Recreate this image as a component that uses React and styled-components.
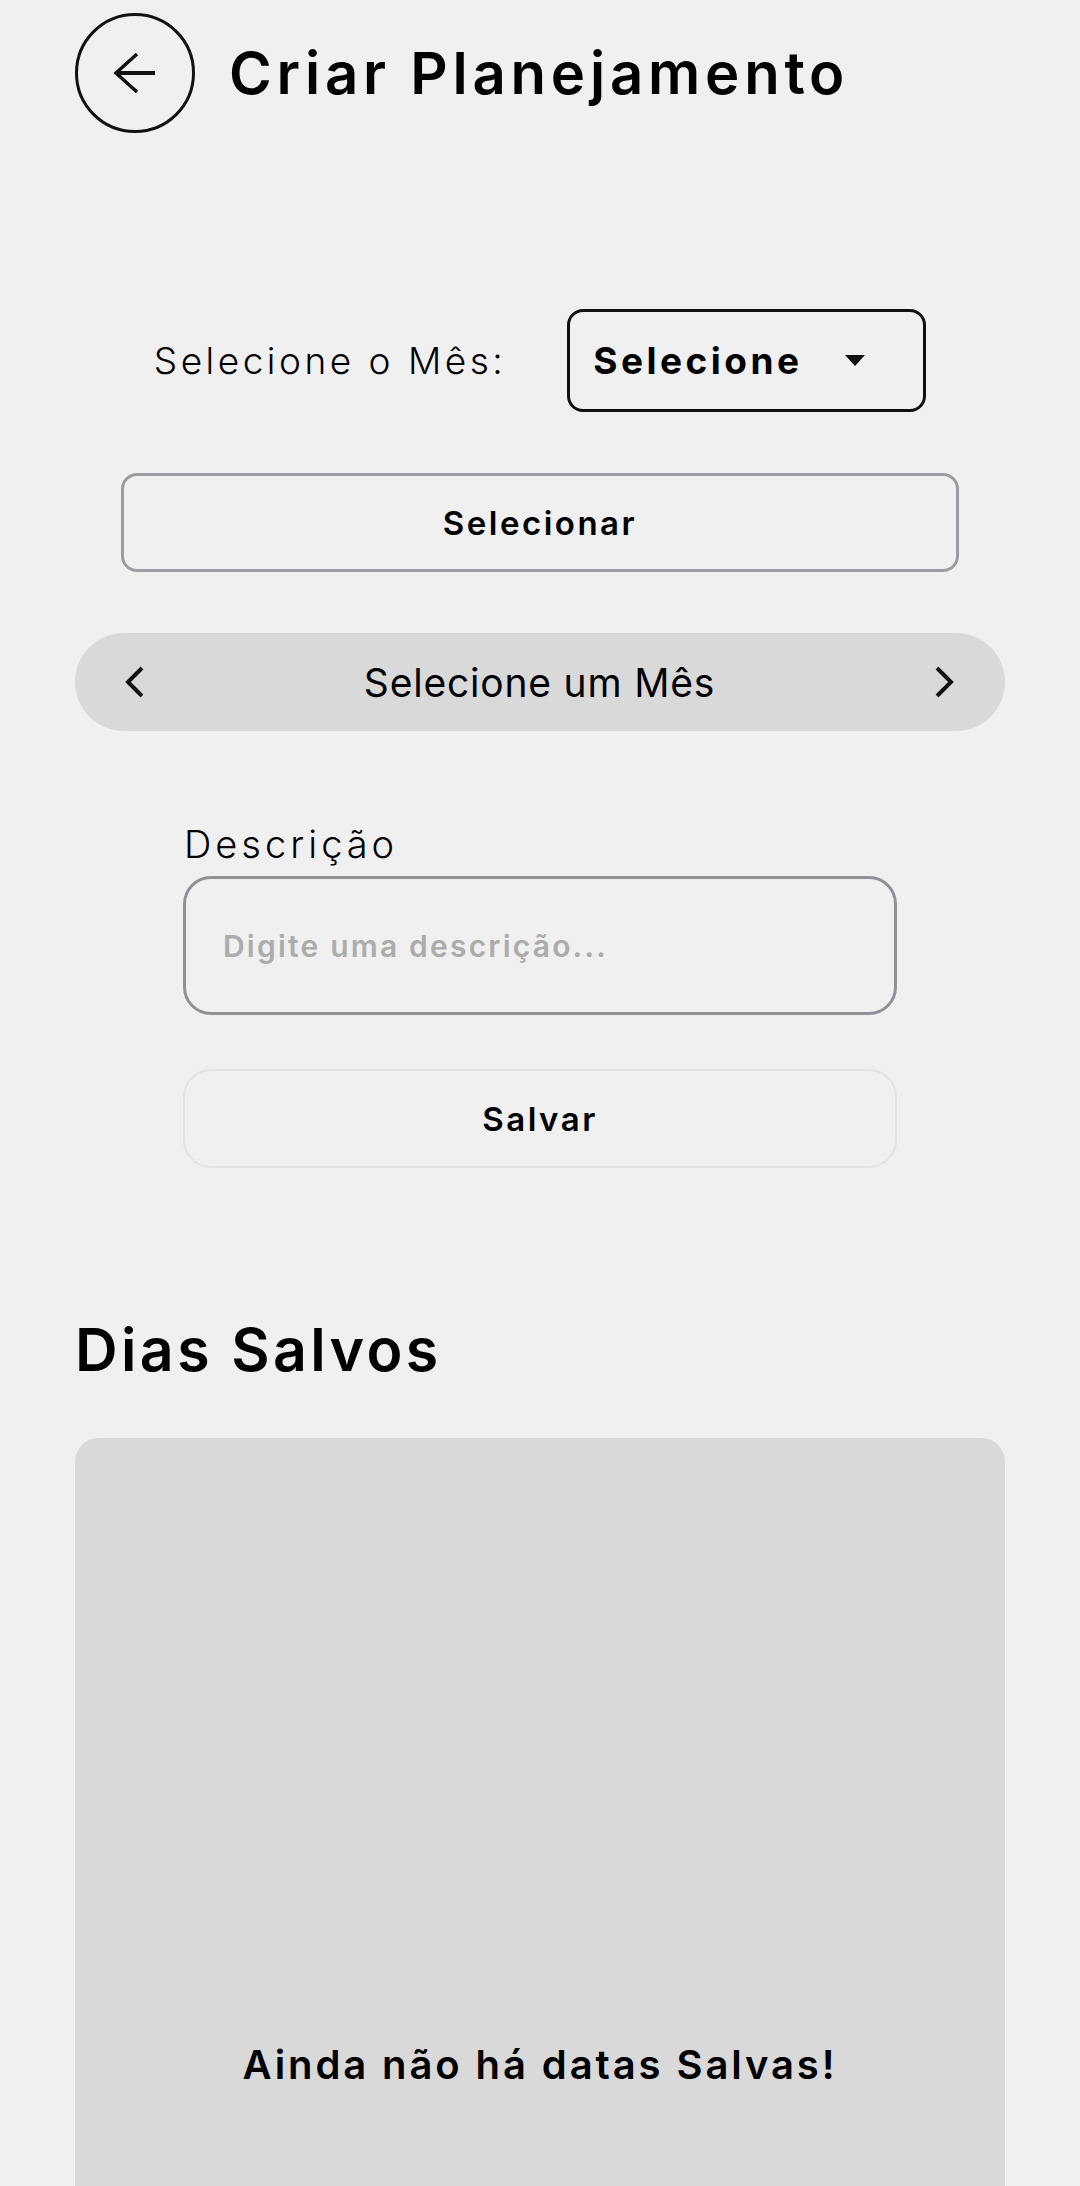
import React from 'react';
import styled, { createGlobalStyle } from 'styled-components';

const GlobalStyle = createGlobalStyle`
  html, body {
    margin: 0;
    padding: 0;
    background: #f0f0f0;
    overflow: hidden;
  }
  body {
    font-family: Inter, 'Liberation Sans', sans-serif;
    color: #000;
  }
`;

const Page = styled.div`
  padding: 13px 75px 0;
  display: flex;
  flex-direction: column;
`;

const Header = styled.header`
  display: flex;
  align-items: center;
  gap: 34px;
`;

const BackButton = styled.button`
  width: 120px;
  height: 120px;
  border-radius: 50%;
  border: 3px solid #111;
  background: transparent;
  display: flex;
  align-items: center;
  justify-content: center;
  padding: 0;
  cursor: pointer;
`;

const Title = styled.h1`
  margin: 0;
  font-size: 58px;
  font-weight: 600;
  letter-spacing: 4.8px;
`;

const MonthRow = styled.div`
  margin-top: 176px;
  display: flex;
  justify-content: center;
  align-items: center;
  gap: 61px;
`;

const RowLabel = styled.span`
  font-size: 37px;
  font-weight: 300;
  letter-spacing: 3.5px;
`;

const Dropdown = styled.div`
  box-sizing: border-box;
  width: 359px;
  height: 103px;
  border: 3px solid #111;
  border-radius: 16px;
  display: flex;
  align-items: center;
  gap: 42px;
  padding-left: 23px;
  font-size: 37px;
  font-weight: 700;
  letter-spacing: 3.5px;
`;

const Caret = styled.span`
  width: 0;
  height: 0;
  border-left: 10px solid transparent;
  border-right: 10px solid transparent;
  border-top: 11px solid #111;
`;

const OutlineButton = styled.button`
  box-sizing: border-box;
  display: block;
  width: ${(p) => p.$width}px;
  height: 99px;
  margin: ${(p) => p.$top}px auto 0;
  border: ${(p) => p.$border};
  border-radius: ${(p) => p.$radius}px;
  background: transparent;
  font-family: Inter, 'Liberation Sans', sans-serif;
  font-size: 33px;
  font-weight: 600;
  letter-spacing: 2.5px;
  color: #000;
`;

const MonthNav = styled.div`
  margin-top: 61px;
  height: 98px;
  border-radius: 49px;
  background: #d9d9d9;
  display: flex;
  align-items: center;
  justify-content: space-between;
  padding: 0 50px 0 49px;
`;

const NavText = styled.span`
  font-size: 39px;
  font-weight: 400;
  letter-spacing: 0.8px;
`;

const DescBlock = styled.div`
  width: 714px;
  margin: 90px auto 0;
  display: flex;
  flex-direction: column;
`;

const DescLabel = styled.label`
  font-size: 38px;
  line-height: 46px;
  font-weight: 300;
  letter-spacing: 4px;
  margin-bottom: 9px;
  padding-left: 1px;
`;

const DescInput = styled.input`
  box-sizing: border-box;
  height: 139px;
  border: 3px solid #909096;
  border-radius: 28px;
  background: transparent;
  padding: 0 0 0 37px;
  font-family: Inter, 'Liberation Sans', sans-serif;
  font-size: 30px;
  font-weight: 600;
  letter-spacing: 2.2px;
  outline: none;

  &::placeholder {
    color: #acacac;
  }
`;

const SectionTitle = styled.h2`
  margin: 146px 0 0;
  font-size: 59px;
  line-height: 72px;
  font-weight: 600;
  letter-spacing: 3.4px;
`;

const SavedCard = styled.div`
  margin-top: 52px;
  height: 1252px;
  border-radius: 24px;
  background: #d9d9d9;
  display: flex;
  align-items: center;
  justify-content: center;
`;

const EmptyText = styled.p`
  margin: 0;
  font-size: 40px;
  font-weight: 600;
  letter-spacing: 2.9px;
`;

function ArrowLeft() {
  return (
    <svg width="44" height="44" viewBox="0 0 44 44" fill="none">
      <path d="M24 3 L3 22 L24 41" stroke="#111" strokeWidth="3.5" strokeLinejoin="miter" />
      <path d="M3 22 H42" stroke="#111" strokeWidth="4" />
    </svg>
  );
}

function Chevron({ dir }) {
  const d = dir === 'left' ? 'M18 2 L4 16 L18 30' : 'M4 2 L18 16 L4 30';
  return (
    <svg width="22" height="32" viewBox="0 0 22 32" fill="none">
      <path d={d} stroke="#111" strokeWidth="4" />
    </svg>
  );
}

export default function App() {
  return (
    <>
      <GlobalStyle />
      <Page>
        <Header>
          <BackButton aria-label="Voltar">
            <ArrowLeft />
          </BackButton>
          <Title>Criar Planejamento</Title>
        </Header>

        <MonthRow>
          <RowLabel>Selecione o Mês:</RowLabel>
          <Dropdown>
            Selecione
            <Caret />
          </Dropdown>
        </MonthRow>

        <OutlineButton $width={838} $top={61} $radius={16} $border="3px solid #9b9ba0">
          Selecionar
        </OutlineButton>

        <MonthNav>
          <Chevron dir="left" />
          <NavText>Selecione um Mês</NavText>
          <Chevron dir="right" />
        </MonthNav>

        <DescBlock>
          <DescLabel>Descrição</DescLabel>
          <DescInput placeholder="Digite uma descrição..." />
          <OutlineButton $width={714} $top={54} $radius={28} $border="2px solid #e3e3e3">
            Salvar
          </OutlineButton>
        </DescBlock>

        <SectionTitle>Dias Salvos</SectionTitle>
        <SavedCard>
          <EmptyText>Ainda não há datas Salvas!</EmptyText>
        </SavedCard>
      </Page>
    </>
  );
}
